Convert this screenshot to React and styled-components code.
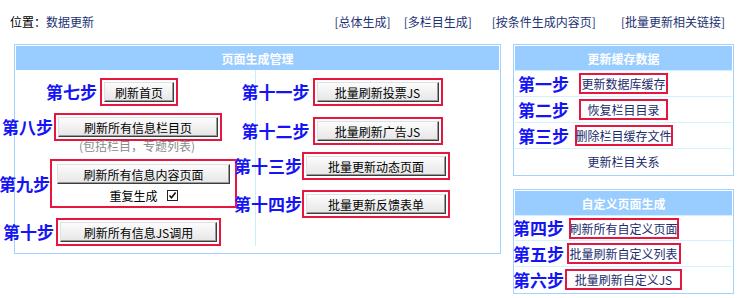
import React from "react";
import styled, { createGlobalStyle } from "styled-components";

const GlobalStyle = createGlobalStyle`
  html, body { margin: 0; padding: 0; background: #fff; }
  body {
    font-family: "Noto Sans CJK SC", "Noto Sans", sans-serif;
    font-size: 12px;
    color: #000;
  }
`;

const Page = styled.div`
  width: 745px;
  height: 298px;
  overflow: hidden;
`;

const TopBar = styled.div`
  display: flex;
  align-items: center;
  height: 44px;
  padding: 0 20px 0 10px;
  line-height: 14px;
  box-sizing: border-box;
`;

const Location = styled.div`
  color: #000;
  span { color: #1c3272; }
`;

const Links = styled.div`
  display: flex;
  margin-left: auto;
`;

const TopLink = styled.a`
  color: #1c3272;
  text-decoration: none;
  white-space: nowrap;
  margin-left: ${(p) => p.$ml || 0}px;
`;

const Main = styled.div`
  display: flex;
  align-items: flex-start;
  gap: 12px;
  padding-left: 14px;
`;

const Panel = styled.div`
  width: ${(p) => p.$w}px;
  box-sizing: border-box;
  border: 1px solid #a2d2ff;
  padding: 1px;
  background: #fff;
`;

const PanelHead = styled.div`
  height: 24px;
  background: #99ccff;
  color: #fff;
  font-weight: bold;
  font-size: 12px;
  display: flex;
  align-items: center;
  justify-content: center;
`;

const Body = styled.div`
  display: grid;
  grid-template-columns: 240px 1fr;
  padding-bottom: 6px;
`;

const Column = styled.div`
  border-right: ${(p) => (p.$divider ? "1px solid #c8eeff" : "none")};
  min-width: 0;
`;

const Stack = styled.div`
  display: flex;
  flex-direction: column;
  align-items: center;
  width: ${(p) => p.$w}px;
  margin-left: ${(p) => p.$ml}px;
`;

const Row = styled.div`
  display: flex;
  align-items: center;
  gap: ${(p) => p.$gap || 0}px;
  margin-top: ${(p) => p.$mt || 0}px;
  margin-left: ${(p) => p.$ml || 0}px;
`;

const StepLabel = styled.span`
  color: #1414f4;
  font-weight: bold;
  font-size: 17px;
  line-height: 20px;
  white-space: nowrap;
  position: relative;
`;

const RedBox = styled.div`
  border: 2px solid #e5173f;
  padding: ${(p) => p.$pad || "2px"};
  background: #fff;
  display: flex;
  flex-direction: column;
  align-items: center;
`;

const Button = styled.button`
  width: ${(p) => p.$w}px;
  height: 20px;
  box-sizing: border-box;
  padding: 0;
  background: linear-gradient(#fcfcfc, #e6e6e6);
  border: 1px solid;
  border-color: #e0e0e0 #3c3c3c #3c3c3c #e0e0e0;
  box-shadow: inset -1px -1px 0 #9a9a9a;
  font-family: "Noto Sans CJK SC", "Noto Sans", sans-serif;
  font-size: 12px;
  line-height: 17px;
  color: #000;
  white-space: nowrap;
`;

const Note = styled.div`
  color: #8a8a8a;
  line-height: 12px;
  margin-top: -1px;
  margin-left: 50px;
  white-space: nowrap;
`;

const CheckLine = styled.div`
  display: flex;
  align-items: center;
  gap: 9px;
  height: 20px;
  margin-top: 1px;
`;

const CheckBox = styled.span`
  width: 11px;
  height: 11px;
  box-sizing: border-box;
  border: 1px solid #222;
  background: #fff;
  display: flex;
  align-items: center;
  justify-content: center;
`;

const SideCol = styled.div`
  display: flex;
  flex-direction: column;
  gap: 13px;
`;

const SideRow = styled.div`
  display: grid;
  grid-template-columns: 1fr auto 1fr;
  align-items: center;
  height: ${(p) => p.$h || 25}px;
  border-top: 1px solid #d2f0ff;
`;

const SideLabel = styled(StepLabel)`
  justify-self: start;
  margin-left: ${(p) => p.$ml}px;
`;

const TextBox = styled.div`
  grid-column: 2;
  width: ${(p) => p.$w}px;
  height: 21px;
  box-sizing: border-box;
  border: 2px solid #e5173f;
  color: #1c2c6c;
  display: flex;
  align-items: center;
  justify-content: center;
  white-space: nowrap;
`;

const PlainText = styled.div`
  grid-column: 2;
  color: #1c2c6c;
`;

function Step({ label, btn, w, mt, gap = 3, pad }) {
  return (
    <Row $mt={mt} $gap={gap}>
      <StepLabel>{label}</StepLabel>
      <RedBox $pad={pad}>
        <Button $w={w}>{btn}</Button>
      </RedBox>
    </Row>
  );
}

const cacheSteps = [
  { label: "第一步", text: "更新数据库缓存", w: 89 },
  { label: "第二步", text: "恢复栏目目录", w: 89 },
  { label: "第三步", text: "删除栏目缓存文件", w: 98 },
];

const customSteps = [
  { label: "第四步", text: "刷新所有自定义页面", w: 110, h: 24 },
  { label: "第五步", text: "批量刷新自定义列表", w: 114, h: 25 },
  { label: "第六步", text: "批量刷新自定义JS", w: 117, h: 25 },
];

export default function App() {
  return (
    <Page>
      <GlobalStyle />
      <TopBar>
        <Location>
          位置：<span>数据更新</span>
        </Location>
        <Links>
          <TopLink href="#">[总体生成]</TopLink>
          <TopLink href="#" $ml={13}>[多栏目生成]</TopLink>
          <TopLink href="#" $ml={20}>[按条件生成内容页]</TopLink>
          <TopLink href="#" $ml={25}>[批量更新相关链接]</TopLink>
        </Links>
      </TopBar>

      <Main>
        <Panel $w={487}>
          <PanelHead>页面生成管理</PanelHead>
          <Body>
            <Column $divider>
              <Stack $w={224} $ml={-16}>
                <Step label="第七步" btn="刷新首页" w={70} mt={8} />
                <Step label="第八步" btn="刷新所有信息栏目页" w={160} mt={7} gap={1} />
                <Note>(包括栏目，专题列表)</Note>
                <Row $mt={7} $gap={-4} $ml={12}>
                  <StepLabel>第九步</StepLabel>
                  <RedBox $pad="3px 5px 1px">
                    <Button $w={173}>刷新所有信息内容页面</Button>
                    <CheckLine>
                      重复生成
                      <CheckBox>
                        <svg width="9" height="9" viewBox="0 0 9 9">
                          <path d="M1.5 4.5 L3.5 6.8 L7.6 1.6" fill="none" stroke="#111" strokeWidth="1.6" />
                        </svg>
                      </CheckBox>
                    </CheckLine>
                  </RedBox>
                </Row>
                <Step label="第十步" btn="刷新所有信息JS调用" w={157} mt={10} gap={2} />
              </Stack>
            </Column>
            <Column>
              <Stack $w={220} $ml={-24}>
                <Step label="第十一步" btn="批量刷新投票JS" w={122} mt={8} />
                <Step label="第十二步" btn="批量刷新广告JS" w={122} mt={11} />
                <Step label="第十三步" btn="批量更新动态页面" w={140} mt={7} gap={0} />
                <Step label="第十四步" btn="批量更新反馈表单" w={140} mt={10} gap={0} />
              </Stack>
            </Column>
          </Body>
        </Panel>

        <SideCol>
          <Panel $w={221}>
            <PanelHead>更新缓存数据</PanelHead>
            {cacheSteps.map((s) => (
              <SideRow key={s.label}>
                <SideLabel $ml={3}>{s.label}</SideLabel>
                <TextBox $w={s.w}>{s.text}</TextBox>
              </SideRow>
            ))}
            <SideRow>
              <PlainText>更新栏目关系</PlainText>
            </SideRow>
          </Panel>

          <Panel $w={221}>
            <PanelHead>自定义页面生成</PanelHead>
            {customSteps.map((s) => (
              <SideRow key={s.label} $h={s.h}>
                <SideLabel $ml={-2}>{s.label}</SideLabel>
                <TextBox $w={s.w}>{s.text}</TextBox>
              </SideRow>
            ))}
          </Panel>
        </SideCol>
      </Main>
    </Page>
  );
}
